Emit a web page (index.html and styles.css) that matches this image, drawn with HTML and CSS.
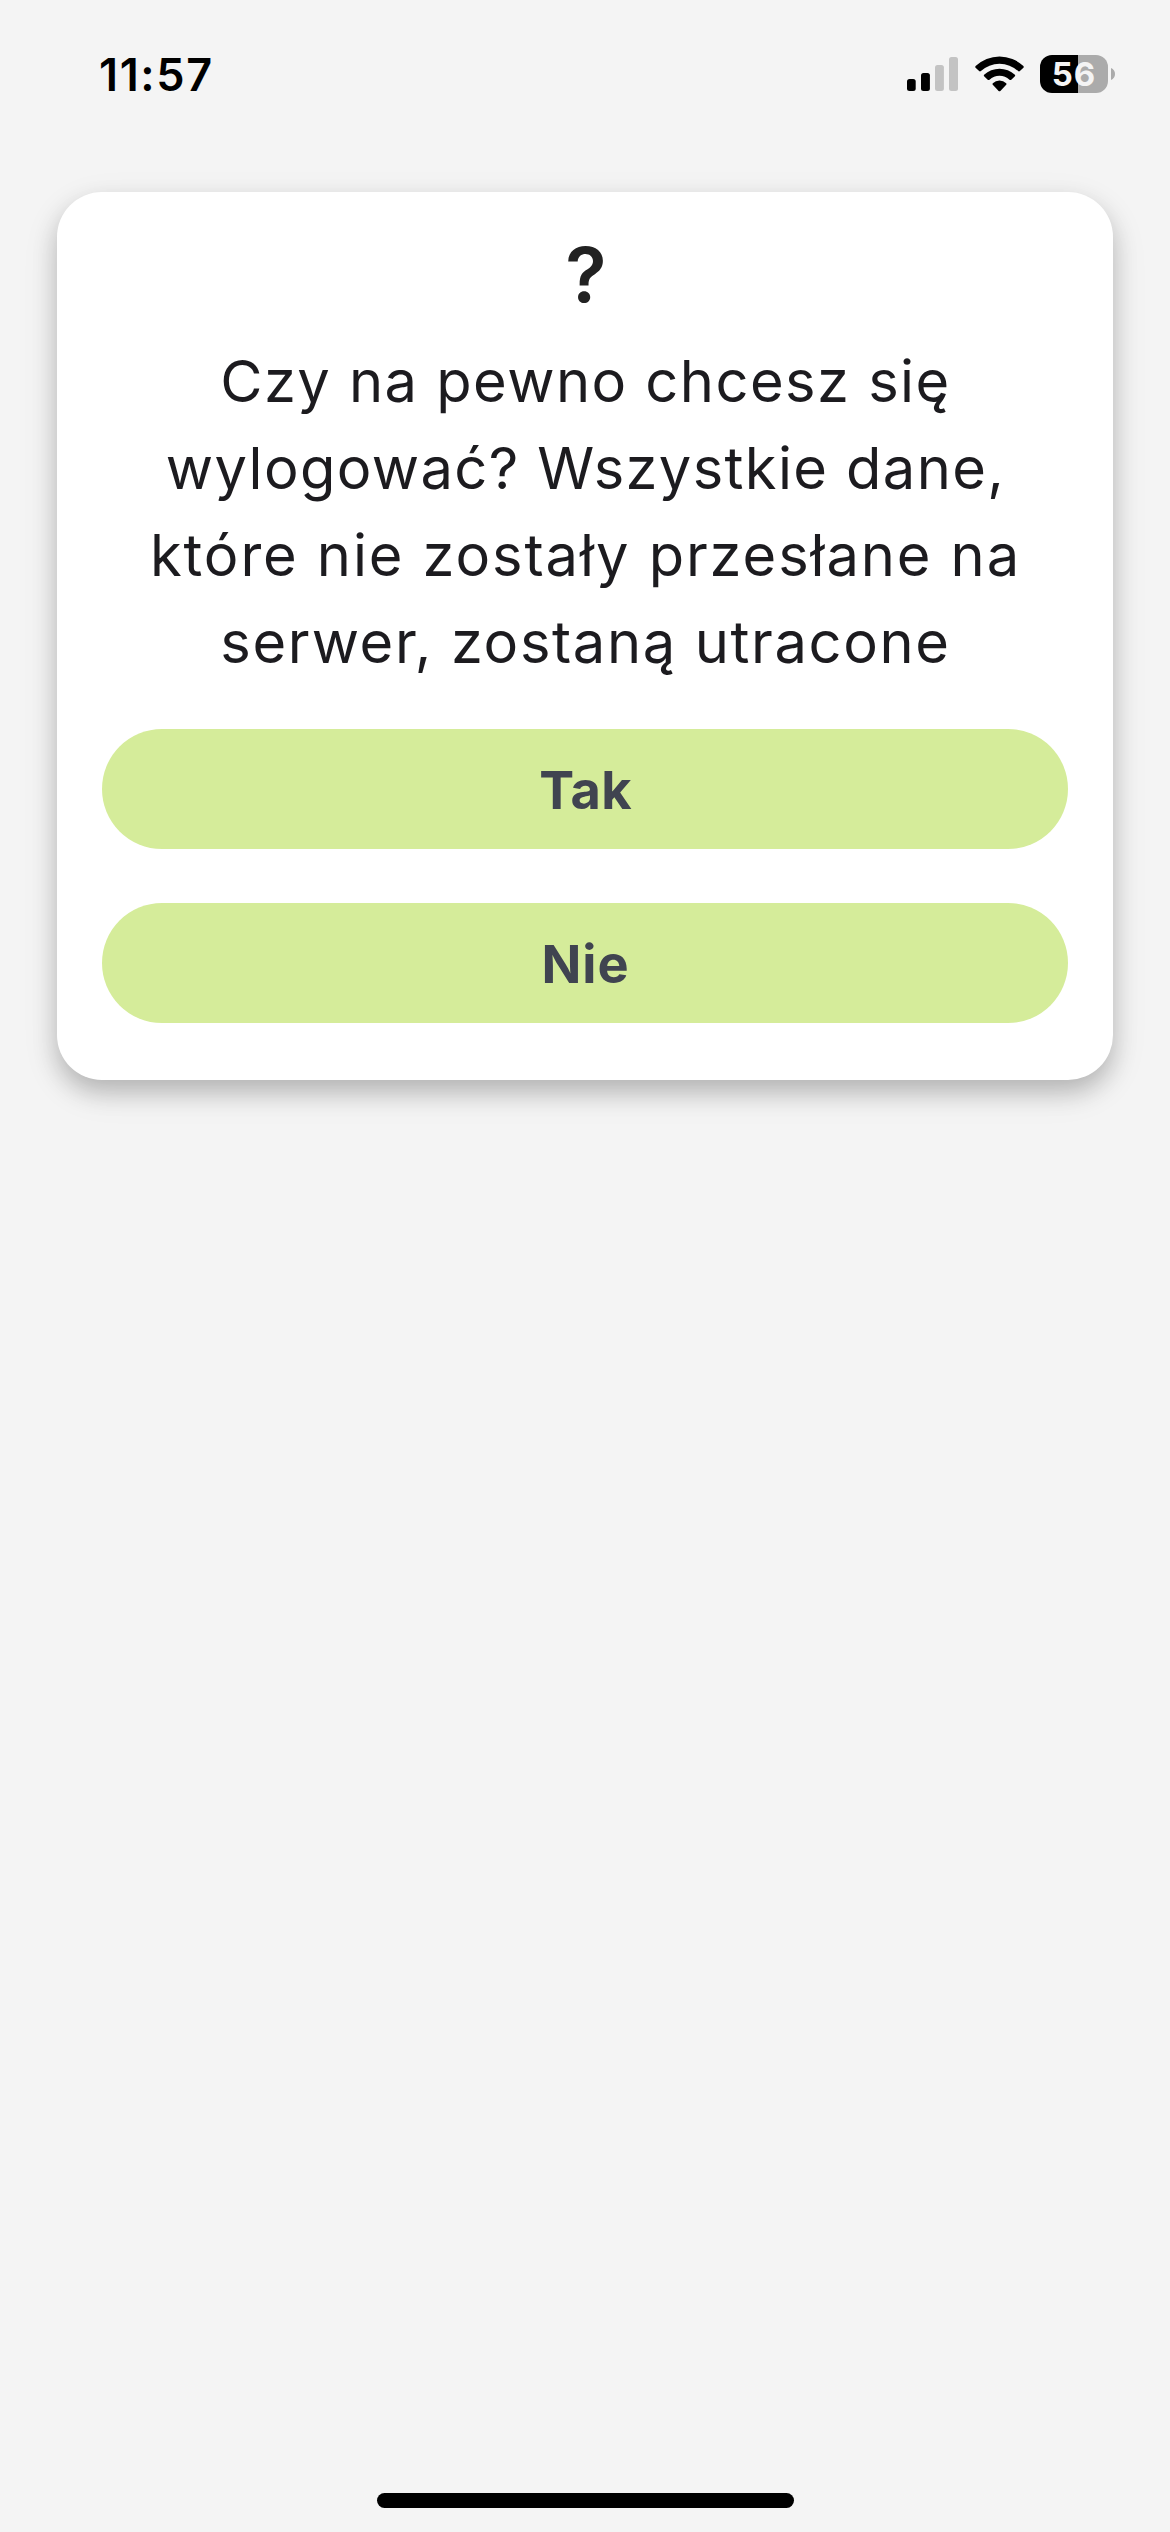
FILE: index.html
```html
<!DOCTYPE html>
<html lang="pl">
<head>
<meta charset="utf-8">
<title>Wylogowanie</title>
<link rel="stylesheet" href="styles.css">
</head>
<body>
<div class="screen">
  <header class="status">
    <span class="time">11:57</span>
    <div class="indicators">
      <svg class="signal" width="51" height="34" viewBox="0 0 51 34">
        <rect x="0" y="22" width="8.7" height="12" rx="2.5"/>
        <rect x="14" y="16" width="8.9" height="18" rx="2.5"/>
        <rect class="off" x="28" y="8" width="8.9" height="26" rx="2.5"/>
        <rect class="off" x="42" y="0" width="9" height="34" rx="2.5"/>
      </svg>
      <svg class="wifi" width="50" height="36" viewBox="0 0 50 36">
        <path d="M.6 10.1Q-.1 10.9.6 11.7L4.1 15.1Q5 15.9 5.9 15.1A27.5 27.5 0 0 1 43.1 15.1Q44 15.9 44.9 15.1L48.4 11.7Q49.1 10.9 48.4 10.1A34.4 34.4 0 0 0 .6 10.1Z"/>
        <path d="M9.1 18.8Q8.4 19.6 9.1 20.3L12.7 23.7Q13.6 24.5 14.5 23.7A14.8 14.8 0 0 1 34.5 23.7Q35.4 24.5 36.3 23.7L39.9 20.3Q40.6 19.6 39.9 18.8A22.5 22.5 0 0 0 9.1 18.8Z"/>
        <path d="M17.8 27.2Q17.1 28 17.8 28.8L23.6 34.9Q24.5 35.8 25.4 34.9L31.2 28.8Q31.9 28 31.2 27.2A10 10 0 0 0 17.8 27.2Z"/>
      </svg>
      <div class="battery"><span class="level">56</span></div>
      <svg class="nub" width="4" height="12" viewBox="0 0 4 12"><path d="M0 0Q4 1.8 4 6T0 12Z"/></svg>
    </div>
  </header>
  <main class="card">
    <h1 class="mark">?</h1>
    <p class="message">
      <span class="line l1">Czy na pewno chcesz się</span>
      <span class="line l2">wylogować? Wszystkie dane,</span>
      <span class="line l3">które nie zostały przesłane na</span>
      <span class="line l4">serwer, zostaną utracone</span>
    </p>
    <div class="actions">
      <button class="btn yes">Tak</button>
      <button class="btn no">Nie</button>
    </div>
  </main>
  <div class="home"></div>
</div>
</body>
</html>
```
FILE: styles.css
```css
* { box-sizing: border-box; }
body { margin: 0; background: #f4f4f4; font-family: "Inter", "Liberation Sans", sans-serif; }
.screen { width: 1170px; height: 2532px; display: flex; flex-direction: column; }

.status { height: 192px; padding: 44px 55px 0 99px; display: flex; justify-content: space-between; align-items: flex-start; }
.time { font-size: 45px; line-height: 61px; font-weight: 600; letter-spacing: 1.65px; color: #000; }
.indicators { display: flex; align-items: center; height: 38px; margin-top: 11px; }
.signal { margin: 0 17px 0 0; }
.off { fill: #c3c3c3; }
.wifi { margin-right: 15px; }
.battery { width: 68px; height: 38px; border-radius: 12px; background: linear-gradient(90deg, #000 37.7px, #ababab 37.7px); display: flex; justify-content: center; }
.level { font-size: 33px; line-height: 38px; font-weight: 700; letter-spacing: 1px; color: #f4f4f4; }
.nub { fill: #ababab; margin-left: 3px; }

.card { margin: 0 57px; height: 888px; padding: 37px 45px 57px; border-radius: 45px; background: #fff; box-shadow: 0 12px 24px rgba(0, 0, 0, .22), 0 12px 42px rgba(0, 0, 0, .07); }
.mark { margin: 0; padding-left: 2px; font-size: 76px; line-height: 90px; font-weight: 600; text-align: center; color: #222; }
.message { margin: 19px 0 43px; padding-left: 1px; font-size: 57.8px; line-height: 87px; text-align: center; color: #1c1b1f; }
.line { display: block; white-space: nowrap; }
.l1 { letter-spacing: 1.46px; }
.l2 { letter-spacing: 1.38px; }
.l3 { letter-spacing: 1.9px; }
.l4 { letter-spacing: 1.64px; }
.actions { display: flex; flex-direction: column; gap: 54px; }
.btn { height: 120px; padding: 2px 0 0 1px; border: 0; border-radius: 60px; background: #d5ec9a; font: 700 52.3px/1 "Inter", "Liberation Sans", sans-serif; color: #404450; }
.yes { letter-spacing: .3px; }
.no { letter-spacing: 1px; }
.home { width: 417px; height: 15px; margin: auto auto 24px; border-radius: 8px; background: #000; }
```
